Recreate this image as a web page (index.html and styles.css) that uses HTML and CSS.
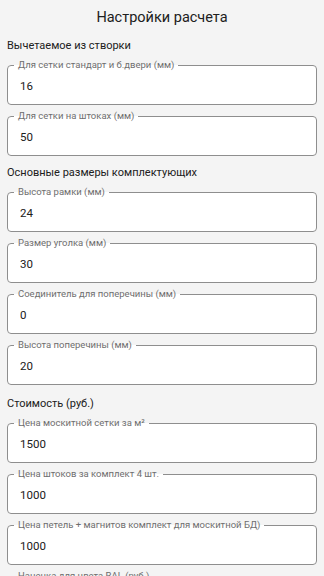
FILE: index.html
```html
<!DOCTYPE html>
<html lang="ru">
<head>
    <meta charset="UTF-8">
    <meta name="viewport" content="width=device-width, initial-scale=1.0">
    <title>Настройки расчета</title>
    <link rel="stylesheet" href="styles.css">
</head>
<body>
    <h1 class="page-title">Настройки расчета</h1>
    <div class="settings">
        <h2 class="group-title">Вычетаемое из створки</h2>
        <fieldset class="field">
            <legend>Для сетки стандарт и б.двери (мм)</legend>
            <input type="text" value="16">
        </fieldset>
        <fieldset class="field">
            <legend>Для сетки на штоках (мм)</legend>
            <input type="text" value="50">
        </fieldset>

        <h2 class="group-title">Основные размеры комплектующих</h2>
        <fieldset class="field">
            <legend>Высота рамки (мм)</legend>
            <input type="text" value="24">
        </fieldset>
        <fieldset class="field">
            <legend>Размер уголка (мм)</legend>
            <input type="text" value="30">
        </fieldset>
        <fieldset class="field">
            <legend>Соединитель для поперечины (мм)</legend>
            <input type="text" value="0">
        </fieldset>
        <fieldset class="field">
            <legend>Высота поперечины (мм)</legend>
            <input type="text" value="20">
        </fieldset>

        <h2 class="group-title group-title-wide">Стоимость (руб.)</h2>
        <fieldset class="field">
            <legend>Цена москитной сетки за м²</legend>
            <input type="text" value="1500">
        </fieldset>
        <fieldset class="field">
            <legend>Цена штоков за комплект 4 шт.</legend>
            <input type="text" value="1000">
        </fieldset>
        <fieldset class="field">
            <legend>Цена петель + магнитов комплект для москитной БД)</legend>
            <input type="text" value="1000">
        </fieldset>
        <fieldset class="field">
            <legend>Наценка для цвета RAL (руб.)</legend>
            <input type="text" value="500">
        </fieldset>
    </div>
</body>
</html>
```

FILE: styles.css
```css
body {
    margin: 0;
    background-color: #f4f4f4;
    font-family: Roboto, "Noto Sans", sans-serif;
    color: #202020;
}
.page-title {
    margin: 0;
    padding-top: 8px;
    font-size: 14.5px;
    font-weight: 400;
    line-height: 20px;
    text-align: center;
}
.settings {
    padding: 0 7px 20px;
}
.group-title {
    margin: 10px 0 5px;
    font-size: 11px;
    font-weight: 400;
    line-height: 16px;
}
.field + .group-title {
    margin-top: 9px;
}
.field + .group-title-wide {
    margin-top: 11px;
}
.field {
    margin: 0 0 5px;
    padding: 0 12px;
    border: 1px solid #8e8e8e;
    border-radius: 4px;
    background-color: #fff;
}
.field legend {
    margin-left: -6px;
    padding: 0 4px;
    font-size: 9.5px;
    line-height: 12px;
    color: #6e6e6e;
}
.field input {
    display: block;
    box-sizing: border-box;
    width: 100%;
    height: 33px;
    margin: 0;
    padding: 0 0 3px;
    border: none;
    outline: none;
    background: transparent;
    font-family: inherit;
    font-size: 11.5px;
    color: #202020;
}
```
